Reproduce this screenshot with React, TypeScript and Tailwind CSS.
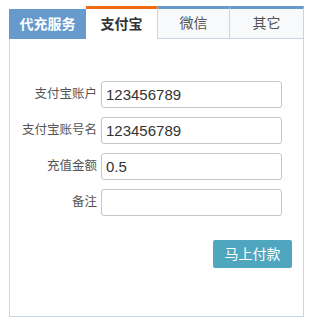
import React from 'react';

const fields = [
  { label: '支付宝账户', value: '123456789' },
  { label: '支付宝账号名', value: '123456789' },
  { label: '充值金额', value: '0.5' },
  { label: '备注', value: '' },
];

export default function App() {
  return (
    <div
      className="bg-white w-[311px] h-[326px] pt-[6px] pl-[9px]"
      style={{ fontFamily: '"Liberation Sans", "Noto Sans CJK SC", sans-serif' }}
    >
      <div className="w-[295px]">
        {/* 标签栏 */}
        <div className="flex h-[33px]">
          <div className="w-[77px] mt-[3px] h-[30px] bg-[#6699cc] text-white text-[14px] font-bold flex items-center justify-center">
            代充服务
          </div>
          <div className="w-[71px] border-t-[3px] border-[#f06a0f] bg-white text-[#333] text-[14px] font-bold flex items-center justify-center">
            支付宝
          </div>
          <div className="w-[72px] border-t-[3px] border-t-[#6699cc] border-l border-b border-l-[#c9d4e4] border-b-[#c9d4e4] bg-[#f7f9fb] text-[#555] text-[14px] flex items-center justify-center">
            微信
          </div>
          <div className="w-[75px] border-t-[3px] border-t-[#6699cc] border-l border-r border-b border-l-[#c9d4e4] border-r-[#c9d4e4] border-b-[#c9d4e4] bg-[#f7f9fb] text-[#555] text-[14px] flex items-center justify-center">
            其它
          </div>
        </div>

        {/* 表单 */}
        <div className="h-[278px] border-l border-r border-b border-[#c9d4e4] pt-[42px] pr-[11px]">
          <div className="flex flex-col gap-[9px]">
            {fields.map((f) => (
              <div key={f.label} className="flex items-center">
                <label className="w-[91px] text-right text-[12.5px] text-[#555] pr-[4px]">{f.label}</label>
                <input
                  readOnly
                  value={f.value}
                  className="w-[181px] h-[27px] border border-[#c6c6c6] rounded-[3px] px-[4px] text-[15px] text-[#333] outline-none"
                />
              </div>
            ))}
          </div>
          <div className="flex justify-end mt-[24px]">
            <button className="w-[79px] h-[28px] bg-[#4fa6bf] rounded-[2px] text-white text-[14px]">
              马上付款
            </button>
          </div>
        </div>
      </div>
    </div>
  );
}
